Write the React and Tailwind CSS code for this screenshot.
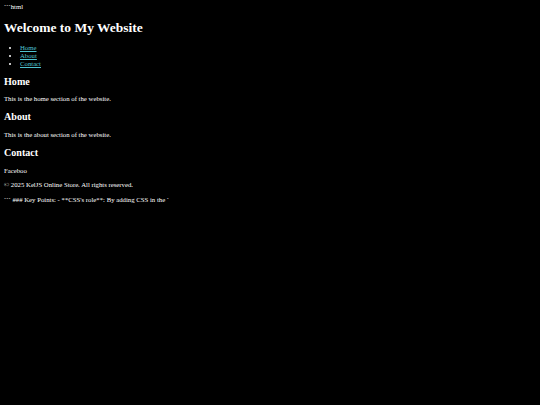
export default function App() {
    return (
        <div className="min-h-[405px] bg-black text-white pl-[4px] pr-[3px] pt-[3px] pb-[4px] text-[6.75px] leading-[1.15] font-['Liberation_Serif',serif] flow-root">
            <div>```html</div>
            <h1 className="text-[13.5px] font-bold my-[9px]">Welcome to My Website</h1>
            <nav>
                <ul className="list-disc pl-[16px] my-[6.75px]">
                    <li><a href="#home" className="text-[#4fc3d0] underline">Home</a></li>
                    <li><a href="#about" className="text-[#4fc3d0] underline">About</a></li>
                    <li><a href="#contact" className="text-[#4fc3d0] underline">Contact</a></li>
                </ul>
            </nav>
            <section>
                <h2 className="text-[10.1px] font-bold my-[8.2px]">Home</h2>
                <p className="my-[6.75px]">This is the home section of the website.</p>
            </section>
            <section>
                <h2 className="text-[10.1px] font-bold my-[8.2px]">About</h2>
                <p className="my-[6.75px]">This is the about section of the website.</p>
            </section>
            <section>
                <h2 className="text-[10.1px] font-bold my-[8.2px]">Contact</h2>
                <p className="my-[6.75px]">Faceboo</p>
            </section>
            <p className="my-[6.5px]">© 2025 KelJS Online Store. All rights reserved.</p>
            <p className="my-[6.5px]">``` ### Key Points: - **CSS's role**: By adding CSS in the `</p>
        </div>
    )
}
